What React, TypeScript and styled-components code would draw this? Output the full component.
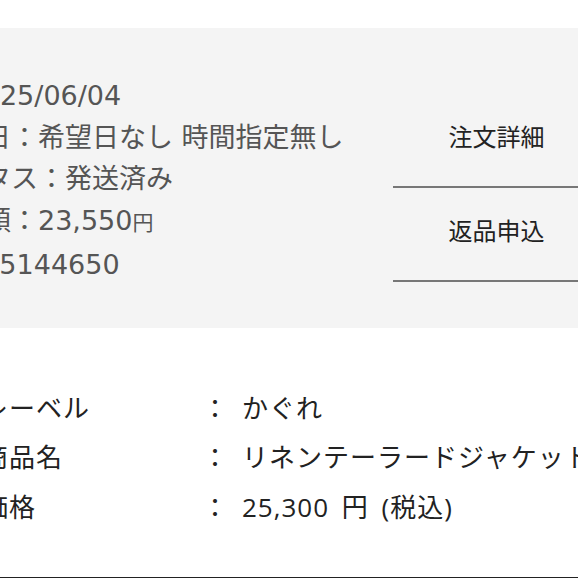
import React, { FC } from 'react';
import styled, { createGlobalStyle } from 'styled-components';

const colors = {
  panel: '#f4f4f4',
  info: '#555555',
  text: '#222222',
  rule: '#777777',
};

const GlobalStyle = createGlobalStyle`
  html, body {
    margin: 0;
    padding: 0;
    background: #ffffff;
    overflow: hidden;
  }
  body {
    font-family: "DejaVu Sans", "Noto Sans CJK JP", sans-serif;
  }
`;

const Page = styled.div`
  width: 578px;
  height: 578px;
  overflow: hidden;
  padding-top: 28px;
  box-sizing: border-box;
  display: flex;
  flex-direction: column;
`;

const OrderPanel = styled.section`
  background: ${colors.panel};
  height: 300px;
  flex-shrink: 0;
  display: flex;
  margin-right: -22px;
`;

const InfoList = styled.div`
  flex: 1;
  margin-left: -97px;
  padding-top: 47px;
  font-size: 27px;
  line-height: 41.5px;
  color: ${colors.info};
  white-space: nowrap;
`;

const InfoLine = styled.div``;

const Yen = styled.span`
  font-size: 21px;
`;

const ActionColumn = styled.div`
  width: 207px;
  padding-top: 66px;
  display: flex;
  flex-direction: column;
`;

const ActionButton = styled.div`
  height: 94px;
  box-sizing: border-box;
  padding-bottom: 10px;
  display: flex;
  align-items: center;
  justify-content: center;
  border-bottom: 2px solid ${colors.rule};
  font-size: 24px;
  color: ${colors.text};
  cursor: pointer;
`;

const ItemTable = styled.div`
  margin-left: -18px;
  padding-top: 54px;
  display: grid;
  grid-template-columns: 220px 40px 1fr;
  grid-auto-rows: 49.5px;
  align-items: center;
  font-family: "Open Sans", "Noto Sans CJK JP", sans-serif;
  font-size: 26px;
  letter-spacing: 1px;
  word-spacing: 5px;
  color: ${colors.text};
  white-space: nowrap;
`;

const Cell = styled.div``;

const BottomRule = styled.div`
  margin-top: auto;
  height: 1px;
  background: #222;
`;

const items = [
  { label: 'レーベル', value: 'かぐれ' },
  { label: '商品名', value: 'リネンテーラードジャケット' },
  { label: '価格', value: '25,300 円 (税込)' },
];

const App: FC = () => {
  return (
    <Page>
      <GlobalStyle />
      <OrderPanel>
        <InfoList>
          <InfoLine>日付 2025/06/04</InfoLine>
          <InfoLine>お届け日：希望日なし 時間指定無し</InfoLine>
          <InfoLine>ステータス：発送済み</InfoLine>
          <InfoLine>
            合計金額：23,550<Yen>円</Yen>
          </InfoLine>
          <InfoLine>No.2505144650</InfoLine>
        </InfoList>
        <ActionColumn>
          <ActionButton>注文詳細</ActionButton>
          <ActionButton>返品申込</ActionButton>
        </ActionColumn>
      </OrderPanel>
      <ItemTable>
        {items.map(item => (
          <React.Fragment key={item.label}>
            <Cell>{item.label}</Cell>
            <Cell>：</Cell>
            <Cell>{item.value}</Cell>
          </React.Fragment>
        ))}
      </ItemTable>
      <BottomRule />
    </Page>
  );
};

export default App;
